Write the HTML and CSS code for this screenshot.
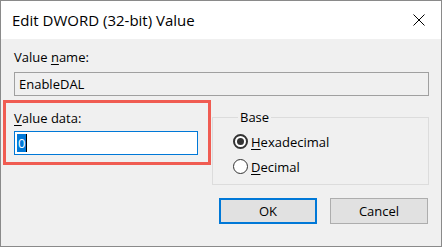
FILE: index.html
```html
<!DOCTYPE html>
<html lang="en">
<head>
    <meta charset="UTF-8">
    <meta name="viewport" content="width=device-width, initial-scale=1.0">
    <title>Edit DWORD (32-bit) Value</title>
    <link rel="stylesheet" href="styles.css">
</head>
<body>
    <div class="dialog">
        <div class="titlebar">
            <span class="title">Edit DWORD (32-bit) Value</span>
            <svg class="close" width="12" height="12" viewBox="0 0 12 12">
                <path d="M0.5 0.5 L11.5 11.5 M11.5 0.5 L0.5 11.5" stroke="#000" stroke-width="1" fill="none"/>
            </svg>
        </div>

        <div class="content">
            <div class="label">Value <u>n</u>ame:</div>
            <div class="name-box">EnableDAL</div>

            <div class="row">
                <div class="data-block">
                    <div class="label"><u>V</u>alue data:</div>
                    <div class="data-box"><span class="sel">0</span><span class="caret"></span></div>
                </div>

                <fieldset class="base">
                    <legend>Base</legend>
                    <div class="radio">
                        <span class="dot checked"></span>
                        <span><u>H</u>exadecimal</span>
                    </div>
                    <div class="radio">
                        <span class="dot"></span>
                        <span><u>D</u>ecimal</span>
                    </div>
                </fieldset>
            </div>

            <div class="buttons">
                <div class="btn default">OK</div>
                <div class="btn">Cancel</div>
            </div>
        </div>
    </div>
</body>
</html>
```

FILE: styles.css
```css
body {
    margin: 0;
    padding: 0;
    background: #ffffff;
    font-family: "Open Sans", "Liberation Sans", sans-serif;
    font-size: 13px;
    color: #000;
}

.dialog {
    width: 442px;
    height: 247px;
    box-sizing: border-box;
    border: 1px solid #8a8a8a;
    background: #f0f0f0;
}

.titlebar {
    height: 38px;
    background: #ffffff;
    display: flex;
    align-items: center;
    justify-content: space-between;
    padding: 0 16px 0 11px;
}

.title {
    font-size: 15px;
    margin-top: -1px;
}

.close {
    display: block;
}

.content {
    padding: 9px 12px 0 13px;
}

.label {
    line-height: 18px;
}

.label u {
    text-underline-offset: 2px;
}

.name-box {
    margin-top: 6px;
    height: 24px;
    box-sizing: border-box;
    border: 1px solid #a0a0a0;
    background: #f0f0f0;
    padding: 0 4px;
    line-height: 22px;
}

.row {
    display: flex;
    align-items: flex-start;
    margin-top: 4px;
}

.data-block {
    margin-left: -11px;
    border: 3px solid #f05c52;
    padding: 6px 10px 7px 8px;
}

.data-box {
    margin-top: 4px;
    width: 184px;
    height: 24px;
    box-sizing: border-box;
    border: 1px solid #0078d7;
    background: #ffffff;
    display: flex;
    align-items: center;
    padding-left: 2px;
}

.sel {
    background: #0078d7;
    color: #ffffff;
    line-height: 18px;
    padding: 0 1px;
}

.caret {
    width: 1px;
    height: 18px;
    background: #000;
}

.base {
    margin: 9px 0 0 1px;
    flex: 1;
    border: 1px solid #dcdcdc;
    padding: 4px 0 5px 20px;
    min-width: 0;
}

.base legend {
    padding: 0 2px;
    margin-left: 5px;
    line-height: 16px;
}

.radio {
    display: flex;
    align-items: center;
    gap: 3px;
    height: 25px;
}

.radio u {
    text-underline-offset: 2px;
}

.dot {
    width: 15px;
    height: 15px;
    box-sizing: border-box;
    border: 1px solid #333;
    border-radius: 50%;
    background: #fff;
    display: flex;
    align-items: center;
    justify-content: center;
}

.dot.checked {
    border-width: 2px;
}

.dot.checked::after {
    content: '';
    width: 7px;
    height: 7px;
    border-radius: 50%;
    background: #333;
}

.buttons {
    display: flex;
    justify-content: flex-end;
    gap: 13px;
    margin-top: 13px;
    margin-right: 1px;
}

.btn {
    width: 98px;
    height: 26px;
    box-sizing: border-box;
    border: 1px solid #adadad;
    background: #e1e1e1;
    display: flex;
    align-items: center;
    justify-content: center;
}

.btn.default {
    border: 2px solid #0078d7;
}
```
